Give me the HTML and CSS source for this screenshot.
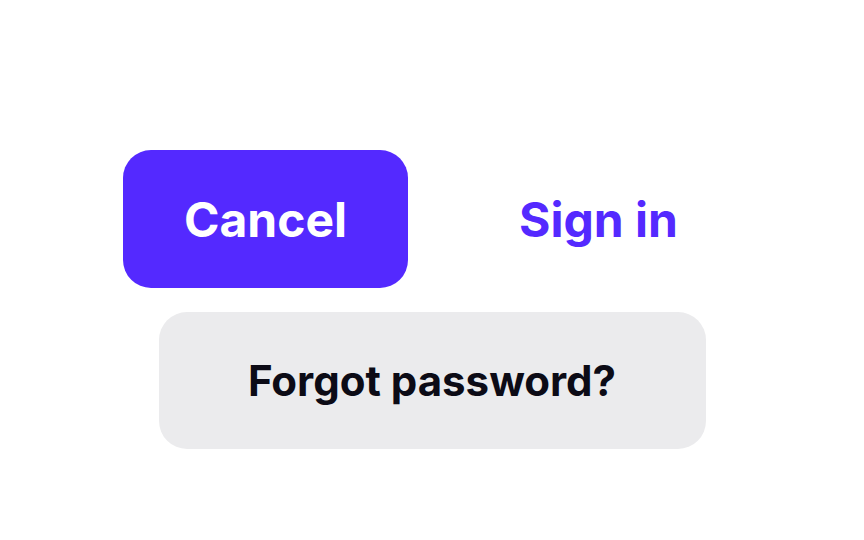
FILE: index.html
```html
<!DOCTYPE html>
<html>
<head>
<meta charset="utf-8">
<link rel="stylesheet" href="styles.css">
</head>
<body>
<div class="wrap">
  <div class="row">
    <button class="btn primary">Cancel</button>
    <button class="btn ghost">Sign in</button>
  </div>
  <div class="row">
    <button class="btn secondary">Forgot password?</button>
  </div>
</div>
</body>
</html>
```
FILE: styles.css
```css
html, body {
  margin: 0;
  padding: 0;
  background: #ffffff;
}
.wrap {
  width: 864px;
  height: 540px;
  box-sizing: border-box;
  padding-top: 150px;
  display: flex;
  flex-direction: column;
  align-items: center;
  gap: 24px;
}
.row {
  display: flex;
  gap: 48px;
}
.btn {
  font-family: Inter, "Liberation Sans", sans-serif;
  font-weight: 700;
  font-size: 48px;
  height: 138px;
  border: none;
  border-radius: 28px;
  padding: 0;
  display: flex;
  align-items: center;
  justify-content: center;
}
.primary {
  width: 285px;
  background: #5429ff;
  color: #ffffff;
}
.ghost {
  width: 285px;
  background: transparent;
  color: #5429ff;
}
.secondary {
  width: 547px;
  height: 137px;
  background: #ebebed;
  color: #0c0b16;
  font-size: 42px;
}
```
